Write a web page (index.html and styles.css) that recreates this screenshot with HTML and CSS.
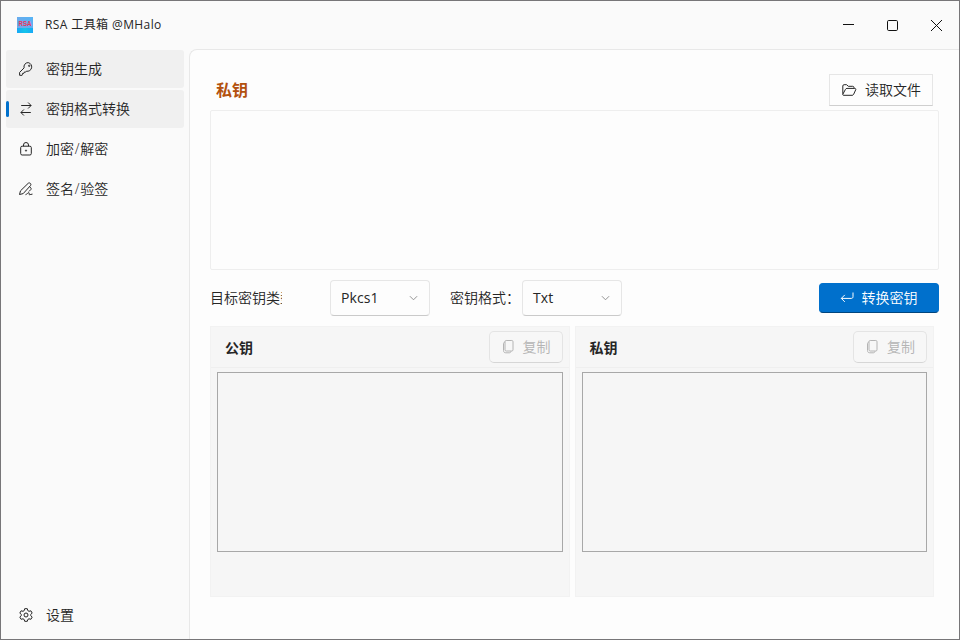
FILE: index.html
```html
<!DOCTYPE html>
<html lang="zh-CN">
<head>
<meta charset="utf-8">
<title>RSA 工具箱</title>
<link rel="stylesheet" href="styles.css">
</head>
<body>
<div class="window">
  <header class="titlebar">
    <svg class="logo" width="16" height="16" viewBox="0 0 16 16">
      <defs>
        <linearGradient id="sky" x1="0" y1="1" x2="1" y2="0"><stop offset="0" stop-color="#7ba4e4"/><stop offset="1" stop-color="#55b4f6"/></linearGradient>
        <linearGradient id="sea" x1="0" y1="0" x2="1" y2="0"><stop offset="0" stop-color="#18a8f6"/><stop offset=".5" stop-color="#14c4ea"/><stop offset="1" stop-color="#18a8f6"/></linearGradient>
      </defs>
      <rect width="16" height="16" fill="url(#sky)"/>
      <rect y="11" width="16" height="5" fill="url(#sea)"/>
      <text x="8" y="8.600" class="logo-text" text-anchor="middle" textLength="13" lengthAdjust="spacingAndGlyphs">RSA</text>
    </svg>
    <span class="title">RSA 工具箱 @MHalo</span>
    <div class="controls">
      <svg width="44" height="48" viewBox="0 0 44 48"><path d="M16 23.500h11"/></svg>
      <svg width="44" height="48" viewBox="0 0 44 48"><rect x="16.500" y="19.500" width="10" height="10" rx="1.200"/></svg>
      <svg width="44" height="48" viewBox="0 0 44 48"><path d="M16 19l11 11M27 19l-11 11"/></svg>
    </div>
  </header>
  <div class="body">
    <nav class="sidebar">
      <a class="item filled">
        <svg class="icon" viewBox="0 0 16 16"><path d="M10.200 1.600a4.200 4.200 0 0 0-4.100 5.300L1.600 11.400v2.900h2.500l.5-1v-.9h1.200l.4-.4v-.9h1.500l.7-.9a4.300 4.300 0 1 0 1.800-8.600z"/><circle cx="11.200" cy="4.800" r=".7"/></svg>
        <span>密钥生成</span>
      </a>
      <a class="item filled selected">
        <svg class="icon" viewBox="0 0 16 16"><path d="M3.200 4.500h9.800M10.100 1.500l3 3-3 3M12.800 11.500H3M5.900 8.500l-3 3 3 3"/></svg>
        <span>密钥格式转换</span>
      </a>
      <a class="item">
        <svg class="icon" viewBox="0 0 16 16"><rect x="2.700" y="5.200" width="10.600" height="8.800" rx="1.400"/><path d="M5.500 5.200V4a2.500 2.500 0 0 1 5 0v1.200"/><circle cx="8" cy="9.600" r=".6"/></svg>
        <span>加密<i class="slash">/</i>解密</span>
      </a>
      <a class="item">
        <svg class="icon" viewBox="0 0 16 16"><path d="M1.500 13.500l1-3.700 7.600-7.400c1.500-1.400 3.700.5 2.400 2.200l-7.300 8-3.700.9zM11.600 5.700l1.200 1.200c.6.700.4 1.300-.2 1.900l-1.700 1.700M7.500 13.700c1.500-.5 2.600-2.200 3.500-2 .9.300-.6 1.900.5 2 .9.100 1.600-.6 3-.6"/></svg>
        <span>签名<i class="slash">/</i>验签</span>
      </a>
      <a class="item settings">
        <svg class="icon" viewBox="0 0 16 16"><path d="M6.700 1.700h2.600l.5 1.900 1.200.7 1.900-.5 1.300 2.200-1.400 1.400v1.300l1.400 1.400-1.300 2.200-1.900-.5-1.200.7-.5 1.800H6.700l-.5-1.800-1.200-.7-1.900.5-1.300-2.200 1.400-1.400V7.400L1.800 6l1.300-2.200 1.900.5 1.200-.7z"/><circle cx="8" cy="8" r="2"/></svg>
        <span>设置</span>
      </a>
    </nav>
    <main class="content">
      <div class="head">
        <h1>私钥</h1>
        <button class="btn open">
          <svg class="icon" viewBox="0 0 16 16"><path d="M1.800 11.800V4c0-.8.500-1.300 1.300-1.300h2.500l1.700 1.600h4.400c.8 0 1.300.5 1.300 1.300v.8M2.300 13.300h8.800c.7 0 1.200-.3 1.500-.9l2.100-4.600c.3-.8 0-1.400-.9-1.400H6c-.7 0-1.200.3-1.500.9l-2.600 4.800c-.3.700-.1 1.200.4 1.200z"/></svg>
          <span>读取文件</span>
        </button>
      </div>
      <div class="source"></div>
      <div class="options">
        <span class="label clipped">目标密钥类型：</span>
        <div class="select first"><span>Pkcs1</span><svg class="chev" viewBox="0 0 10 6"><path d="M1 1l4 4 4-4"/></svg></div>
        <span class="label format">密钥格式：</span>
        <div class="select"><span>Txt</span><svg class="chev" viewBox="0 0 10 6"><path d="M1 1l4 4 4-4"/></svg></div>
        <button class="btn primary">
          <svg class="icon" viewBox="0 0 16 16"><path d="M14 2.500v4.200c0 1.100-.6 1.700-1.700 1.700H2.300M5.800 4.900L2.300 8.400l3.500 3.500"/></svg>
          <span>转换密钥</span>
        </button>
      </div>
      <div class="results">
        <section class="card">
          <div class="card-head"><h2>公钥</h2>
            <button class="btn copy"><svg class="icon" viewBox="0 0 16 16"><rect x="5" y="1.500" width="8" height="10.500" rx="1.200"/><path d="M5 3c-1 .2-1.500.7-1.500 1.700v6.800c0 1.500.8 2.300 2.300 2.300h3.500c1 0 1.500-.5 1.700-1.500"/></svg><span>复制</span></button>
          </div>
          <div class="output"></div>
        </section>
        <section class="card">
          <div class="card-head"><h2>私钥</h2>
            <button class="btn copy"><svg class="icon" viewBox="0 0 16 16"><rect x="5" y="1.500" width="8" height="10.500" rx="1.200"/><path d="M5 3c-1 .2-1.500.7-1.500 1.700v6.800c0 1.500.8 2.300 2.300 2.300h3.500c1 0 1.500-.5 1.700-1.500"/></svg><span>复制</span></button>
          </div>
          <div class="output"></div>
        </section>
      </div>
    </main>
  </div>
</div>
</body>
</html>
```
FILE: styles.css
```css
* { box-sizing: border-box; }
body {
  margin: 0;
  font: 14px/20px "Open Sans", "Noto Sans CJK SC", sans-serif;
  font-weight: 350;
  color: #262626;
}
svg { display: block; fill: none; stroke: currentColor; flex: none; }
.window {
  width: 960px;
  height: 640px;
  border: 1px solid #777678;
  background: #fafafa;
  display: flex;
  flex-direction: column;
}
.titlebar {
  height: 48px;
  flex: none;
  display: flex;
  align-items: center;
  padding-left: 16px;
}
.logo { stroke: none; }
.logo-text {
  font: 700 7px "Liberation Sans", sans-serif;
  fill: #e8365c;
}
.title {
  margin-left: 12px;
  font-size: 12px;
  font-weight: 400;
  letter-spacing: .4px;
  white-space: nowrap;
}
.controls { display: flex; margin-left: auto; color: #111; }
.body { flex: 1; display: flex; min-height: 0; }
.sidebar {
  width: 188px;
  flex: none;
  padding: 1px 5px 5px;
  display: flex;
  flex-direction: column;
  gap: 2px;
}
.item {
  width: 178px;
  height: 38px;
  border-radius: 3px;
  display: flex;
  align-items: center;
  padding-left: 12px;
  position: relative;
}
.item span { margin-left: 12px; }
.slash { font-style: normal; margin: 0 .7px; }
.icon { width: 16px; height: 16px; }
.filled { background: #f0f0f0; }
.selected::before {
  content: "";
  position: absolute;
  left: 0;
  top: 11px;
  width: 3px;
  height: 16px;
  border-radius: 2px;
  background: #0070cc;
}
.settings { margin-top: auto; }
.content {
  flex: 1;
  background: #fdfdfd;
  border: 1px solid #e8e8e8;
  border-width: 1px 0 0 1px;
  border-top-left-radius: 8px;
  padding: 24px 20px 0;
}
.head {
  height: 32px;
  display: flex;
  justify-content: space-between;
  align-items: center;
  padding: 0 6px;
}
h1 { margin: 0; font-size: 16px; font-weight: 700; color: #b3510e; }
.btn {
  display: flex;
  align-items: center;
  justify-content: center;
  font: inherit;
  color: inherit;
  background: #fdfdfd;
  border: 1px solid #e6e6e6;
  border-bottom-color: #cfcfcf;
  padding: 0;
}
.open { width: 104px; height: 32px; }
.open span { margin-left: 8px; }
.source {
  width: 729px;
  height: 160px;
  margin-top: 4px;
  border: 1px solid #eee;
  border-radius: 2px;
}
.options {
  width: 729px;
  height: 36px;
  margin-top: 10px;
  display: flex;
  align-items: center;
}
.label { white-space: nowrap; overflow: hidden; }
.clipped { width: 72px; }
.select {
  width: 100px;
  height: 36px;
  border: 1px solid #e6e6e6;
  border-bottom-color: #cacaca;
  border-radius: 4px;
  display: flex;
  align-items: center;
  justify-content: space-between;
  padding: 0 11px 0 10px;
  font-weight: 400;
  letter-spacing: .1px;
}
.first { margin-left: 48px; }
.format { margin-left: 20px; width: 72px; }
.chev { width: 9px; height: 6px; color: #888; }
.primary {
  width: 120px;
  height: 30px;
  margin-left: auto;
  border-radius: 4px;
  background: #0070cc;
  border-color: #0070cc;
  border-bottom-color: #00457e;
  color: #fff;
  padding-right: 2px;
}
.primary span { margin-left: 7px; }
.results { display: flex; gap: 5px; margin-top: 10px; width: 724px; }
.card {
  flex: 1;
  height: 271px;
  background: #f6f6f6;
  border: 1px solid #f2f2f2;
}
.card-head {
  height: 41px;
  display: flex;
  align-items: center;
  justify-content: space-between;
  padding: 0 6px 0 14px;
  border-bottom: 1px solid #efefef;
}
h2 { margin: 1px 0 0; font-size: 14px; line-height: 20px; font-weight: 700; }
.copy {
  width: 74px;
  height: 32px;
  border-radius: 5px;
  background: #f7f7f7;
  border-color: #e4e4e4;
  border-bottom-color: #d6d6d6;
  color: #b4b4b4;
  padding-right: 1px;
}
.copy span { margin-left: 7px; }
.output {
  height: 180px;
  margin: 4px 6px 0;
  border: 1px solid #a8a8a8;
}
```
